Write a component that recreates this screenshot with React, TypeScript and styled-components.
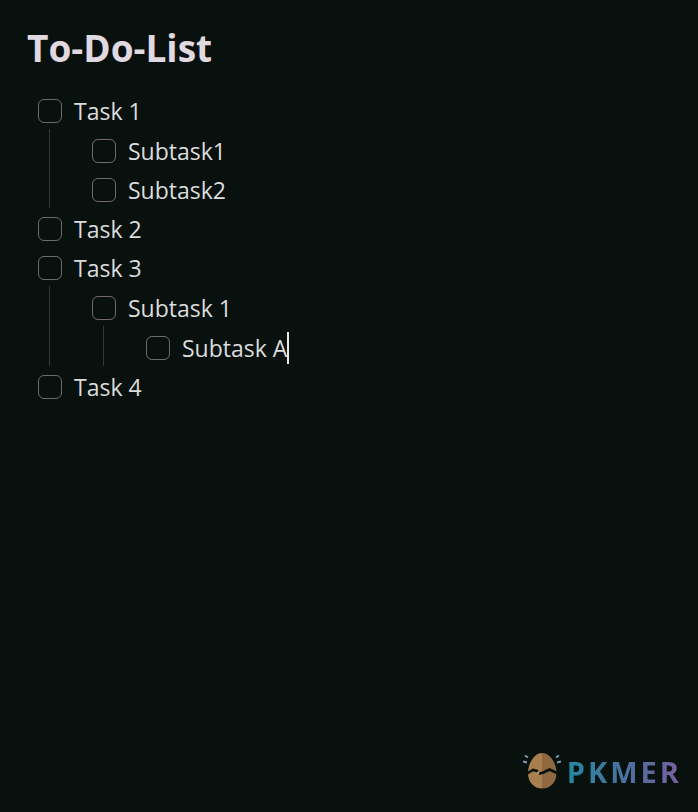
import React from 'react'
import styled, { createGlobalStyle } from 'styled-components';

type Task = {
  id: string;
  text: string;
  editing?: boolean;
  children?: Task[];
}

const tasks: Task[] = [
  {
    id: 'task-1',
    text: 'Task 1',
    children: [
      { id: 'task-1-1', text: 'Subtask1' },
      { id: 'task-1-2', text: 'Subtask2' },
    ],
  },
  { id: 'task-2', text: 'Task 2' },
  {
    id: 'task-3',
    text: 'Task 3',
    children: [
      {
        id: 'task-3-1',
        text: 'Subtask 1',
        children: [{ id: 'task-3-1-1', text: 'Subtask A', editing: true }],
      },
    ],
  },
  { id: 'task-4', text: 'Task 4' },
];

function TaskItem({ task }: { task: Task }) {
  return (
    <li>
      <TaskRow>
        <Checkbox type="checkbox" id={task.id} />
        <TaskLabel htmlFor={task.id}>{task.text}</TaskLabel>
        {task.editing && <Caret />}
      </TaskRow>
      {task.children && (
        <SubList>
          {task.children.map(child => <TaskItem key={child.id} task={child} />)}
        </SubList>
      )}
    </li>
  )
}

function EggIcon() {
  return (
    <svg width="38" height="38" viewBox="0 0 38 38" aria-hidden="true">
      <path d="M19 0C11.500 0 5 10 5 20C5 29.500 11 35.500 19 35.500Z" fill="#a8804f" />
      <path d="M19 0C27 0 33.500 10 33.500 20C33.500 29.500 27.500 35.500 19 35.500Z" fill="#8f683f" />
      <path
        d="M4 20.500L10 17L14 18L16.500 20.500L20.500 19.500L26.500 16.500L35 20.500"
        fill="none"
        stroke="#09110f"
        strokeWidth="2.600"
      />
      <path d="M13 20L17.500 16.500L15.500 22Z" fill="#b88d5a" />
      <path d="M2 2.500L5 4.500M0 8.500L4 9.500M36 2.500L33 4.500M38 8.500L34 9.500" stroke="#7f9aaa" strokeWidth="2" />
    </svg>
  )
}

export default function App() {
  return (
    <>
      <GlobalStyle />
      <Page>
        <Title>To-Do-List</Title>
        <TaskList>
          {tasks.map(task => <TaskItem key={task.id} task={task} />)}
        </TaskList>
        <Brand>
          <EggIcon />
          <BrandName>PKMER</BrandName>
        </Brand>
      </Page>
    </>
  )
}

const GlobalStyle = createGlobalStyle`
  * {
    box-sizing: border-box;
  }
  body {
    margin: 0;
    background: #09110f;
    color: #dcdcdc;
    font-family: 'Open Sans', 'Noto Sans', sans-serif;
  }
`

const Page = styled.main`
  display: flex;
  flex-direction: column;
  min-height: 100vh;
  padding: 24px 16px 20px 27px;
`

const Title = styled.h1`
  margin: 0 0 21px;
  color: #e0d9e0;
  font-size: 37px;
  font-weight: 700;
  line-height: 48px;
`

const TaskList = styled.ul`
  display: flex;
  flex-direction: column;
  gap: 3px;
  margin: 0 0 0 11px;
  padding: 0;
  list-style: none;
`

// the left border is the indent guide under the parent's checkbox
const SubList = styled(TaskList)`
  padding: 4px 0 0 42px;
  border-left: 1px solid #383636;
`

const TaskRow = styled.div`
  display: flex;
  align-items: center;
  height: 36px;
`

const Checkbox = styled.input`
  appearance: none;
  width: 24px;
  height: 24px;
  margin: 0 12px 0 0;
  border: 1px solid #716b68;
  border-radius: 6px;

  &:checked {
    background: #716b68;
  }
`

const TaskLabel = styled.label`
  font-size: 23px;
  line-height: 36px;
`

const Caret = styled.span`
  width: 2px;
  height: 32px;
  background: #e8e8e8;
`

const Brand = styled.div`
  display: flex;
  align-items: center;
  align-self: flex-end;
  gap: 6px;
  margin-top: auto;
`

const BrandName = styled.span`
  background: linear-gradient(90deg, #2388a0, #4b719f 50%, #7a60a0);
  background-clip: text;
  color: transparent;
  font-size: 29px;
  font-weight: 700;
  line-height: 40px;
  letter-spacing: 3px;
`
